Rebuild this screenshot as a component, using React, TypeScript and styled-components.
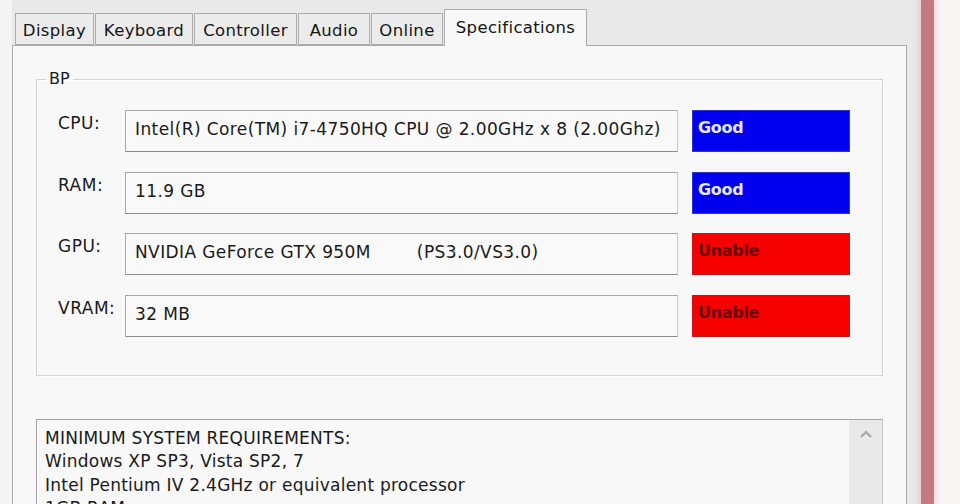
import styled, {createGlobalStyle} from "styled-components";

const GlobalStyle = createGlobalStyle`
    html, body {
        margin: 0;
        padding: 0;
        background: #fbf6f6;
        font-family: "DejaVu Sans", "Noto Sans", sans-serif;
        color: #1a1a1a;
    }
`;

const Screen = styled.div`
    display: flex;
    width: 960px;
    height: 504px;
    overflow: hidden;
`;

const Window = styled.div`
    width: 921px;
    flex-shrink: 0;
    padding: 9px 14px 0 12px;
    box-sizing: border-box;
    background: linear-gradient(to right, #f4f4f4 12px, #e9e9e9 12px);
`;

const EdgeBar = styled.div`
    width: 13px;
    flex-shrink: 0;
    background: #c8787f;
    box-shadow: 0 0 6px 2px rgba(220, 150, 155, 0.35);
`;

const TabRow = styled.div`
    display: flex;
    align-items: flex-end;
    gap: 1px;
    height: 36px;
    padding-left: 3px;
    position: relative;
    z-index: 1;
`;

const Tab = styled.div<{ $active?: boolean; $w: number }>`
    display: flex;
    align-items: center;
    justify-content: center;
    box-sizing: border-box;
    width: ${p => p.$w}px;
    height: ${p => (p.$active ? "37px" : "32px")};
    margin-bottom: ${p => (p.$active ? "-1px" : "0")};
    padding: ${p => (p.$active ? "0 0 2px" : "2px 0 0")};
    border: 1px solid #acacac;
    border-bottom: ${p => (p.$active ? "none" : "1px solid #acacac")};
    background: ${p => (p.$active ? "#f8f8f8" : "#ebebeb")};
    font-size: 16.5px;
    letter-spacing: 0.35px;
    color: #151515;
    white-space: nowrap;
`;

const Panel = styled.div`
    border: 1px solid #a9a9a9;
    background: #f8f8f8;
    padding: 22px 23px 0 23px;
    height: 500px;
    box-sizing: border-box;
`;

const GroupBox = styled.fieldset`
    margin: 0;
    padding: 20px 20px 38px 21px;
    border: 1px solid #d3d3d3;
    box-shadow: inset 1px 1px 0 #ffffff, 1px 1px 0 #ffffff;
`;

const Legend = styled.legend`
    margin-left: -12px;
    padding: 0 3px;
    font-size: 16px;
    line-height: 22px;
    color: #1a1a1a;
`;

const SpecGrid = styled.div`
    display: grid;
    grid-template-columns: 53px 553px 158px;
    grid-auto-rows: 42px;
    column-gap: 14px;
    row-gap: 19.5px;
`;

const SpecLabel = styled.div`
    padding-top: 3px;
    font-size: 17px;
    letter-spacing: 0.5px;
    color: #1a1a1a;
    white-space: nowrap;
`;

const ValueField = styled.div`
    display: flex;
    align-items: center;
    gap: 46px;
    box-sizing: border-box;
    padding: 0 9px 4px;
    border: 1px solid #a6a6a6;
    border-right-color: #c9c9c9;
    border-bottom-color: #8c8c8c;
    background: #f9f9f9;
    font-size: 17px;
    letter-spacing: 0.4px;
    white-space: nowrap;
`;

const Status = styled.div<{ $ok: boolean }>`
    box-sizing: border-box;
    padding: 7px 5px 0;
    background: ${p => (p.$ok ? "#0000f0" : "#f70000")};
    border: 1px solid ${p => (p.$ok ? "#3333c8" : "#c01818")};
    color: ${p => (p.$ok ? "#e4e8ff" : "#6a0a0a")};
    font-weight: bold;
    font-size: 16px;
    letter-spacing: -0.3px;
`;

const Requirements = styled.div`
    display: flex;
    margin-top: 43px;
    height: 120px;
    border: 1px solid #a3a3a3;
    border-right-color: #c4c4c4;
    background: #f8f8f8;
`;

const ReqText = styled.div`
    flex: 1;
    padding: 7px 8px;
    font-size: 17px;
    letter-spacing: 0.25px;
    line-height: 23.5px;
    color: #1a1a1a;
    white-space: pre;
`;

const ScrollTrack = styled.div`
    width: 33px;
    display: flex;
    justify-content: center;
    padding-top: 10px;
    box-sizing: border-box;
    background: #e9e9e9;
`;

const specs = [
    {label: "CPU:", value: ["Intel(R) Core(TM) i7-4750HQ CPU @ 2.00GHz x 8 (2.00Ghz)"], ok: true},
    {label: "RAM:", value: ["11.9 GB"], ok: true},
    {label: "GPU:", value: ["NVIDIA GeForce GTX 950M", "(PS3.0/VS3.0)"], ok: false},
    {label: "VRAM:", value: ["32 MB"], ok: false},
];

const tabs = [
    {name: "Display", w: 79},
    {name: "Keyboard", w: 98},
    {name: "Controller", w: 103},
    {name: "Audio", w: 72},
    {name: "Online", w: 72},
    {name: "Specifications", w: 143},
];

export default function App() {
    return (
        <>
            <GlobalStyle/>
            <Screen>
                <Window>
                    <TabRow>
                        {tabs.map(t => (
                            <Tab key={t.name} $w={t.w} $active={t.name === "Specifications"}>{t.name}</Tab>
                        ))}
                    </TabRow>
                    <Panel>
                        <GroupBox>
                            <Legend>BP</Legend>
                            <SpecGrid>
                                {specs.map(s => (
                                    <>
                                        <SpecLabel key={s.label + "l"}>{s.label}</SpecLabel>
                                        <ValueField key={s.label + "v"}>
                                            {s.value.map(v => <span key={v}>{v}</span>)}
                                        </ValueField>
                                        <Status key={s.label + "s"} $ok={s.ok}>{s.ok ? "Good" : "Unable"}</Status>
                                    </>
                                ))}
                            </SpecGrid>
                        </GroupBox>
                        <Requirements>
                            <ReqText>
                                {"MINIMUM SYSTEM REQUIREMENTS:\nWindows XP SP3, Vista SP2, 7\nIntel Pentium IV 2.4GHz or equivalent processor\n1GB RAM"}
                            </ReqText>
                            <ScrollTrack>
                                <svg width="14" height="9" viewBox="0 0 14 9">
                                    <path d="M2 7 L7 2 L12 7" fill="none" stroke="#a8a8a8" strokeWidth="2.2"/>
                                </svg>
                            </ScrollTrack>
                        </Requirements>
                    </Panel>
                </Window>
                <EdgeBar/>
            </Screen>
        </>
    );
}
